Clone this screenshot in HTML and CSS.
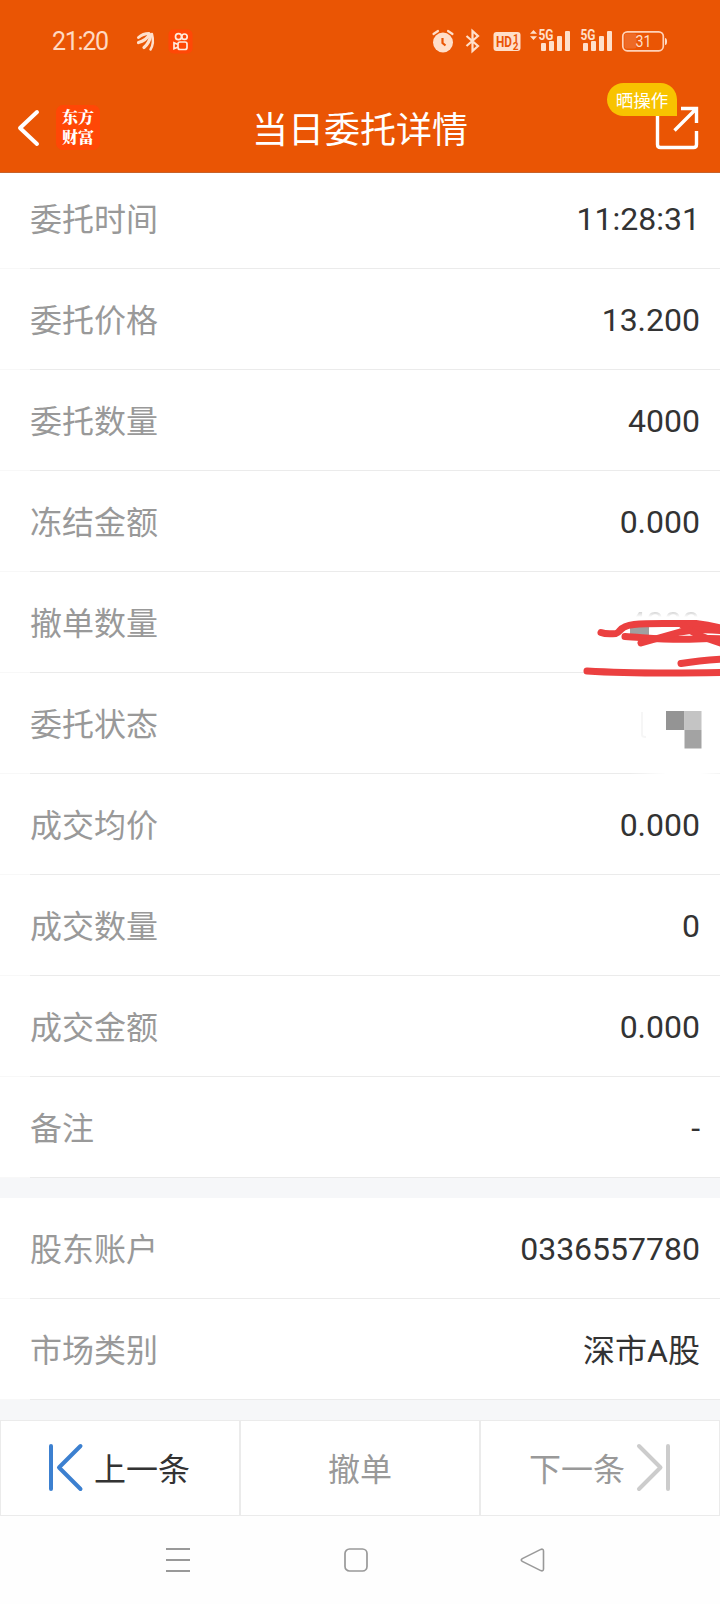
FILE: index.html
```html
<!DOCTYPE html>
<html lang="zh-CN">
<head>
<meta charset="utf-8">
<title>当日委托详情</title>
<link rel="stylesheet" href="styles.css">
</head>
<body>
<div class="screen">
  <header class="header">
    <div class="status">
      <span class="clock">21:20</span>
      <svg class="status-apps" width="60" height="26" viewBox="135 28 60 26">
        <g fill="none" stroke="#ffe0cc" stroke-linecap="round">
          <path d="M138.500 37.500Q143 33.500 149 33.500" stroke-width="3"/>
          <path d="M138.500 42.500Q146 40.500 149.500 34.500" stroke-width="3.200"/>
          <path d="M144 47.500Q149.500 43 150.800 35" stroke-width="3.200"/>
          <path d="M150.500 49.500Q154.500 43 152 34" stroke-width="2.400"/>
        </g>
        <rect x="168.500" y="29.500" width="24" height="24" rx="5" fill="#ff4706"/>
        <g fill="none" stroke="#ffe9dc" stroke-width="1.700">
          <circle cx="178.500" cy="36.700" r="3"/><circle cx="184.500" cy="36.700" r="2.700"/>
          <rect x="178" y="42" width="9" height="7.500" rx="2"/>
          <path d="M178 44.500L174 42.700V48.700L178 47"/>
        </g>
      </svg>
      <svg class="status-icons" width="240" height="28" viewBox="430 27 240 28">
        <circle cx="443" cy="42.500" r="10" fill="#ffdfca"/>
        <path d="M433.500 34L438 31M448 31L452.500 34" stroke="#ffdfca" stroke-width="2.200" stroke-linecap="round"/>
        <path d="M442.500 38V43L445.500 45.500" fill="none" stroke="#ea5504" stroke-width="2.200"/>
        <path d="M466.500 36L478 46L472.500 51V31L478 36L466.500 46" fill="none" stroke="#ffdfca" stroke-width="2.200"/>
        <rect x="493.500" y="32" width="27" height="19" rx="3" fill="#ffdfca"/>
        <text x="496" y="47" class="hd" textLength="16" lengthAdjust="spacingAndGlyphs">HD</text>
        <text x="513" y="41.500" class="hd-small">1</text><text x="512.800" y="49.700" class="hd-small">2</text>
        <g fill="#ffdfca">
          <path d="M530 33.700L533.500 30L537 33.700ZM530 36.300L533.500 40L537 36.300Z"/>
          <text x="538.500" y="40" class="net" textLength="15" lengthAdjust="spacingAndGlyphs">5G</text>
          <rect x="541" y="43" width="5" height="8" rx="1"/><rect x="549" y="41" width="5" height="10" rx="1"/><rect x="557" y="36" width="5" height="15" rx="1"/><rect x="565" y="31" width="5" height="20" rx="1"/>
          <text x="580.500" y="40" class="net" textLength="15" lengthAdjust="spacingAndGlyphs">5G</text>
          <rect x="583" y="43" width="5" height="8" rx="1"/><rect x="591" y="41" width="5" height="10" rx="1"/><rect x="599" y="36" width="5" height="15" rx="1"/><rect x="607" y="31" width="5" height="20" rx="1"/>
          <rect x="624.500" y="33.500" width="12" height="15" rx="2" fill="#ee6a26"/>
          <rect x="622.800" y="31.800" width="40.500" height="19" rx="4.500" fill="none" stroke="#ffd2b8" stroke-width="1.700"/>
          <path d="M665 38Q667 38 667 41.500T665 45Z"/>
          <text x="635.500" y="47" class="battery" textLength="16" lengthAdjust="spacingAndGlyphs">31</text>
        </g>
      </svg>
    </div>
    <div class="titlebar">
      <div class="left">
        <svg width="24" height="40" viewBox="17 108 24 40"><path d="M37 112L20 128L37 144" fill="none" stroke="#fff" stroke-width="4" stroke-linecap="round" stroke-linejoin="round"/></svg>
        <div class="logo">东方<br>财富</div>
      </div>
      <h1 class="title">当日委托详情</h1>
      <div class="share">
        <svg width="46" height="46" viewBox="654 105 46 46"><path d="M681 108.500H696.500V123M696.500 131V144.500Q696.500 147.500 693.500 147.500H660.500Q657.500 147.500 657.500 144.500V112M674.500 130.500L696 109" fill="none" stroke="#fff" stroke-width="3.400"/></svg>
        <span class="badge">晒操作</span>
      </div>
    </div>
  </header>

  <main class="list">
    <div class="row first"><span class="label">委托时间</span><span class="value">11:28:31</span></div>
    <div class="row"><span class="label">委托价格</span><span class="value">13.200</span></div>
    <div class="row"><span class="label">委托数量</span><span class="value">4000</span></div>
    <div class="row"><span class="label">冻结金额</span><span class="value">0.000</span></div>
    <div class="row"><span class="label">撤单数量</span><span class="value faded">4000</span></div>
    <div class="row short-line"><span class="label">委托状态</span></div>
    <div class="row"><span class="label">成交均价</span><span class="value">0.000</span></div>
    <div class="row"><span class="label">成交数量</span><span class="value">0</span></div>
    <div class="row"><span class="label">成交金额</span><span class="value">0.000</span></div>
    <div class="row"><span class="label">备注</span><span class="value">-</span></div>
    <div class="gap"></div>
    <div class="row"><span class="label">股东账户</span><span class="value">0336557780</span></div>
    <div class="row"><span class="label">市场类别</span><span class="value han">深市A股</span></div>
    <div class="gap"></div>
    <svg class="marks" width="160" height="180" viewBox="0 0 160 180">
      <rect x="70" y="35" width="19" height="11" fill="#a0a0a0"/>
      <g fill="none" stroke="#eb4040" stroke-width="7" stroke-linecap="round" stroke-linejoin="round">
        <path d="M41 42.500Q46 44.500 56 43.500C61 42 59 36 74 34.500C92 32.500 116 34 136 33.500Q150 35 164 39"/>
        <path d="M65 46.500C90 48 110 50.500 136 49Q150 48 164 49"/>
        <path d="M81 53L120 42Q140 38 164 41"/>
        <path d="M121 34Q133 45 164 54"/>
        <path d="M121 73.500Q140 70.500 164 69"/>
        <path d="M27 81Q75 84 164 82.500"/>
      </g>
      <path d="M82 122V145Q82 147 86 147" fill="none" stroke="#f6f6f6" stroke-width="2"/>
      <rect x="106" y="121" width="18.500" height="19" fill="#949494"/>
      <rect x="124.500" y="121" width="17" height="19" fill="#c4c4c4"/>
      <rect x="124.500" y="140" width="17" height="18.500" fill="#a3a3a3"/>
    </svg>
  </main>

  <footer class="actions">
    <div class="action prev">
      <svg width="38" height="52" viewBox="46 1441 38 52"><path d="M51 1446V1489M80.500 1446L59 1467.500L80.500 1489" fill="none" stroke="#3c80d0" stroke-width="4" stroke-linecap="round" stroke-linejoin="round"/></svg>
      <span>上一条</span>
    </div>
    <div class="action cancel"><span>撤单</span></div>
    <div class="action next">
      <span>下一条</span>
      <svg width="38" height="52" viewBox="635 1441 38 52"><path d="M668 1446V1489M639 1446L660.500 1467.500L639 1489" fill="none" stroke="#ccc" stroke-width="4" stroke-linecap="round" stroke-linejoin="round"/></svg>
    </div>
  </footer>

  <nav class="sysnav">
    <svg width="28" height="28" viewBox="0 0 28 28"><path d="M2 3H26M2 14H26M2 25H26" stroke="#999" stroke-width="1.800"/></svg>
    <svg width="28" height="28" viewBox="0 0 28 28"><rect x="3" y="3" width="22" height="22" rx="4.500" fill="none" stroke="#999" stroke-width="1.700"/></svg>
    <svg width="28" height="28" viewBox="0 0 28 28"><path d="M3.300 12.600L21.800 3.400Q24.300 2.500 24.500 5V23Q24.300 25.500 21.800 24.600L3.300 15.400Q1.200 14 3.300 12.600Z" fill="none" stroke="#999" stroke-width="1.600"/></svg>
  </nav>
</div>
</body>
</html>
```

FILE: styles.css
```css
* { box-sizing: border-box; }
body {
  margin: 0;
  background: #fefefe;
  font-family: Roboto, "Noto Sans CJK SC", sans-serif;
}
svg { display: block; flex: none; }
.screen {
  width: 720px;
  height: 1604px;
  display: flex;
  flex-direction: column;
  overflow: hidden;
}
.header {
  height: 173px;
  flex: none;
  background: #ea5504;
  border-bottom: 1px solid #c8622a;
}
.status {
  height: 83px;
  display: flex;
  padding-left: 52px;
}
.clock {
  width: 83px;
  padding-top: 27px;
  font-size: 25px;
  line-height: 30px;
  letter-spacing: -1.3px;
  color: #ffd9c2;
}
.status-apps { margin-top: 28px; }
.status-icons { margin: 27px 0 0 235px; }
.hd { font: bold 14px Roboto, sans-serif; fill: #ea5504; }
.hd-small { font: bold 10px Roboto, sans-serif; fill: #ea5504; }
.net { font: bold 14px Roboto, sans-serif; }
.battery { font: 17px Roboto, sans-serif; }
.titlebar {
  height: 89px;
  display: grid;
  grid-template-columns: 200px 1fr 200px;
  align-items: center;
}
.left {
  display: flex;
  align-items: center;
  gap: 15px;
  padding-left: 17px;
}
.logo {
  width: 44px;
  height: 45px;
  padding-top: 2px;
  border-radius: 7px;
  background: #ff4706;
  color: #fff;
  text-align: center;
  font: 900 16px/20px "Noto Serif CJK SC", "Noto Sans CJK SC", sans-serif;
}
.title {
  margin: 7px 0 0;
  text-align: center;
  font-size: 36px;
  line-height: 52px;
  font-weight: 400;
  color: #fff;
  white-space: nowrap;
}
.share {
  position: relative;
  justify-self: end;
  margin-right: 20px;
}
.badge {
  position: absolute;
  left: -47px;
  top: -22px;
  width: 70px;
  height: 33px;
  border-radius: 17px 17px 0 17px;
  background: #f8c300;
  color: #fff;
  font-size: 17.500px;
  line-height: 36px;
  text-align: center;
  white-space: nowrap;
}
.list {
  position: relative;
  background: #fff;
  height: 1247px;
  flex: none;
}
.row {
  height: 101px;
  display: flex;
  align-items: center;
  justify-content: space-between;
  padding: 2px 20px 0 30px;
  font-size: 32px;
  line-height: 46px;
  background:
    linear-gradient(#ebebeb, #ebebeb) 30px 100% / 690px 1px no-repeat,
    linear-gradient(#f8f8f8, #f8f8f8) 0 100% / 30px 1px no-repeat;
}
.row.first { height: 96px; padding-bottom: 5px; }
.row.short-line {
  background:
    linear-gradient(90deg, #ebebeb 600px, #fff 636px, #fff 670px, #f4f4f4 690px) 30px 100% / 690px 1px no-repeat,
    linear-gradient(#f8f8f8, #f8f8f8) 0 100% / 30px 1px no-repeat;
}
.label { color: #999; }
.value { color: #333; margin-top: -2px; }
.value.han { margin-top: 0; }
.value.faded {
  background: linear-gradient(#ccc 0, #ccc 11px, #fff 17px);
  background-clip: text;
  -webkit-background-clip: text;
  color: transparent;
}
.gap {
  height: 20px;
  background: #f6f7f9;
}
.marks {
  position: absolute;
  left: 560px;
  top: 417px;
}
.actions {
  flex: none;
  height: 96px;
  display: grid;
  grid-template-columns: repeat(3, 1fr);
  background: #fff;
}
.action {
  display: flex;
  align-items: center;
  justify-content: center;
  border: 1px solid #ebebeb;
  font-size: 32px;
  line-height: 46px;
  color: #999;
}
.action span { padding-top: 3px; }
.action svg { margin-top: -2px; }
.prev { color: #333; justify-content: flex-start; padding-left: 45px; gap: 10px; }
.next { justify-content: flex-end; padding-right: 46px; gap: 10px; }
.sysnav {
  flex: 1;
  display: flex;
  justify-content: space-between;
  padding: 30px 173px 0 164px;
}
```
